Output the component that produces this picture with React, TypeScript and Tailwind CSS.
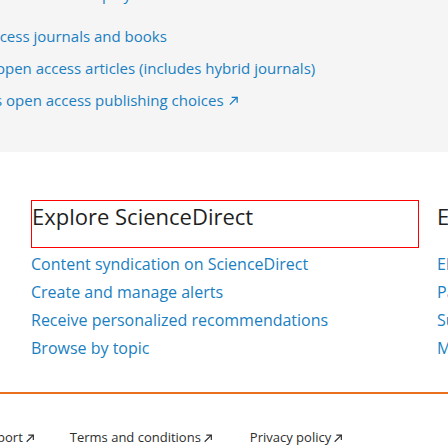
import React from 'react'

const ExtArrow = ({ className = '' }: { className?: string }) => (
  <svg viewBox="0 0 12 12" className={className} fill="none" stroke="currentColor" strokeWidth={1.4}>
    <path d="M2 10.5 L10 2.5" />
    <path d="M4 2.5 H10 V8.5" />
  </svg>
)

const exploreLinks = [
  'Content syndication on ScienceDirect',
  'Create and manage alerts',
  'Receive personalized recommendations',
  'Browse by topic',
]

const nextColumn = ['Elsevier', 'Partners', 'Support', 'Mobile']

const App: React.FC = () => {
  return (
    <div className="relative h-[448px] w-[448px] overflow-hidden bg-white font-['Open_Sans',sans-serif]">
      {/* Open access block */}
      <div className="h-[152px] overflow-hidden bg-[#f5f5f5] text-[15px] text-[#1a7fc1]">
        <p className="-mt-[17px] whitespace-nowrap leading-[22px]">Articles are displayed on the article</p>
        <ul className="mt-[20px] flex flex-col gap-[10px] whitespace-nowrap leading-[22px]">
          <li className="-ml-[17px]">Access journals and books</li>
          <li className="-ml-[4px]">open access articles (includes hybrid journals)</li>
          <li className="-ml-[5px] flex items-center gap-1">
            <span>s open access publishing choices</span>
            <ExtArrow className="h-[11px] w-[11px]" />
          </li>
        </ul>
      </div>

      {/* Explore */}
      <div className="flex w-[600px] gap-[18px] pl-[31px] pt-[48px]">
        <div className="w-[388px] shrink-0">
          <h2 className="h-[48px] border border-[#ff0000] text-[22px] leading-[30px] text-[#1f1f1f]">Explore ScienceDirect</h2>
          <ul className="mt-[2px] flex flex-col text-[16px] leading-[28px] text-[#1a7fc1]">
            {exploreLinks.map((l) => (
              <li key={l} className="whitespace-nowrap">{l}</li>
            ))}
          </ul>
        </div>
        <div className="w-[150px] shrink-0">
          <h2 className="h-[48px] pt-[1px] text-[22px] leading-[30px] text-[#1f1f1f]">Elsevier</h2>
          <ul className="mt-[2px] flex flex-col text-[16px] leading-[28px] text-[#1a7fc1]">
            {nextColumn.map((c) => (
              <li key={c} className="whitespace-nowrap">{c}</li>
            ))}
          </ul>
        </div>
      </div>

      {/* Footer */}
      <div className="mt-[30px] h-[2px] bg-[#e9711c]" />
      <div className="mt-[34px] flex items-center whitespace-nowrap text-[13px] text-[#2e2e2e]">
        <a className="-ml-[26px] flex items-center gap-[2px]">Support<ExtArrow className="h-[10px] w-[10px]" /></a>
        <a className="ml-[35px] flex items-center gap-[2px]">Terms and conditions<ExtArrow className="h-[10px] w-[10px]" /></a>
        <a className="ml-[37px] flex items-center gap-[2px]">Privacy policy<ExtArrow className="h-[10px] w-[10px]" /></a>
      </div>
    </div>
  )
}

export default App
